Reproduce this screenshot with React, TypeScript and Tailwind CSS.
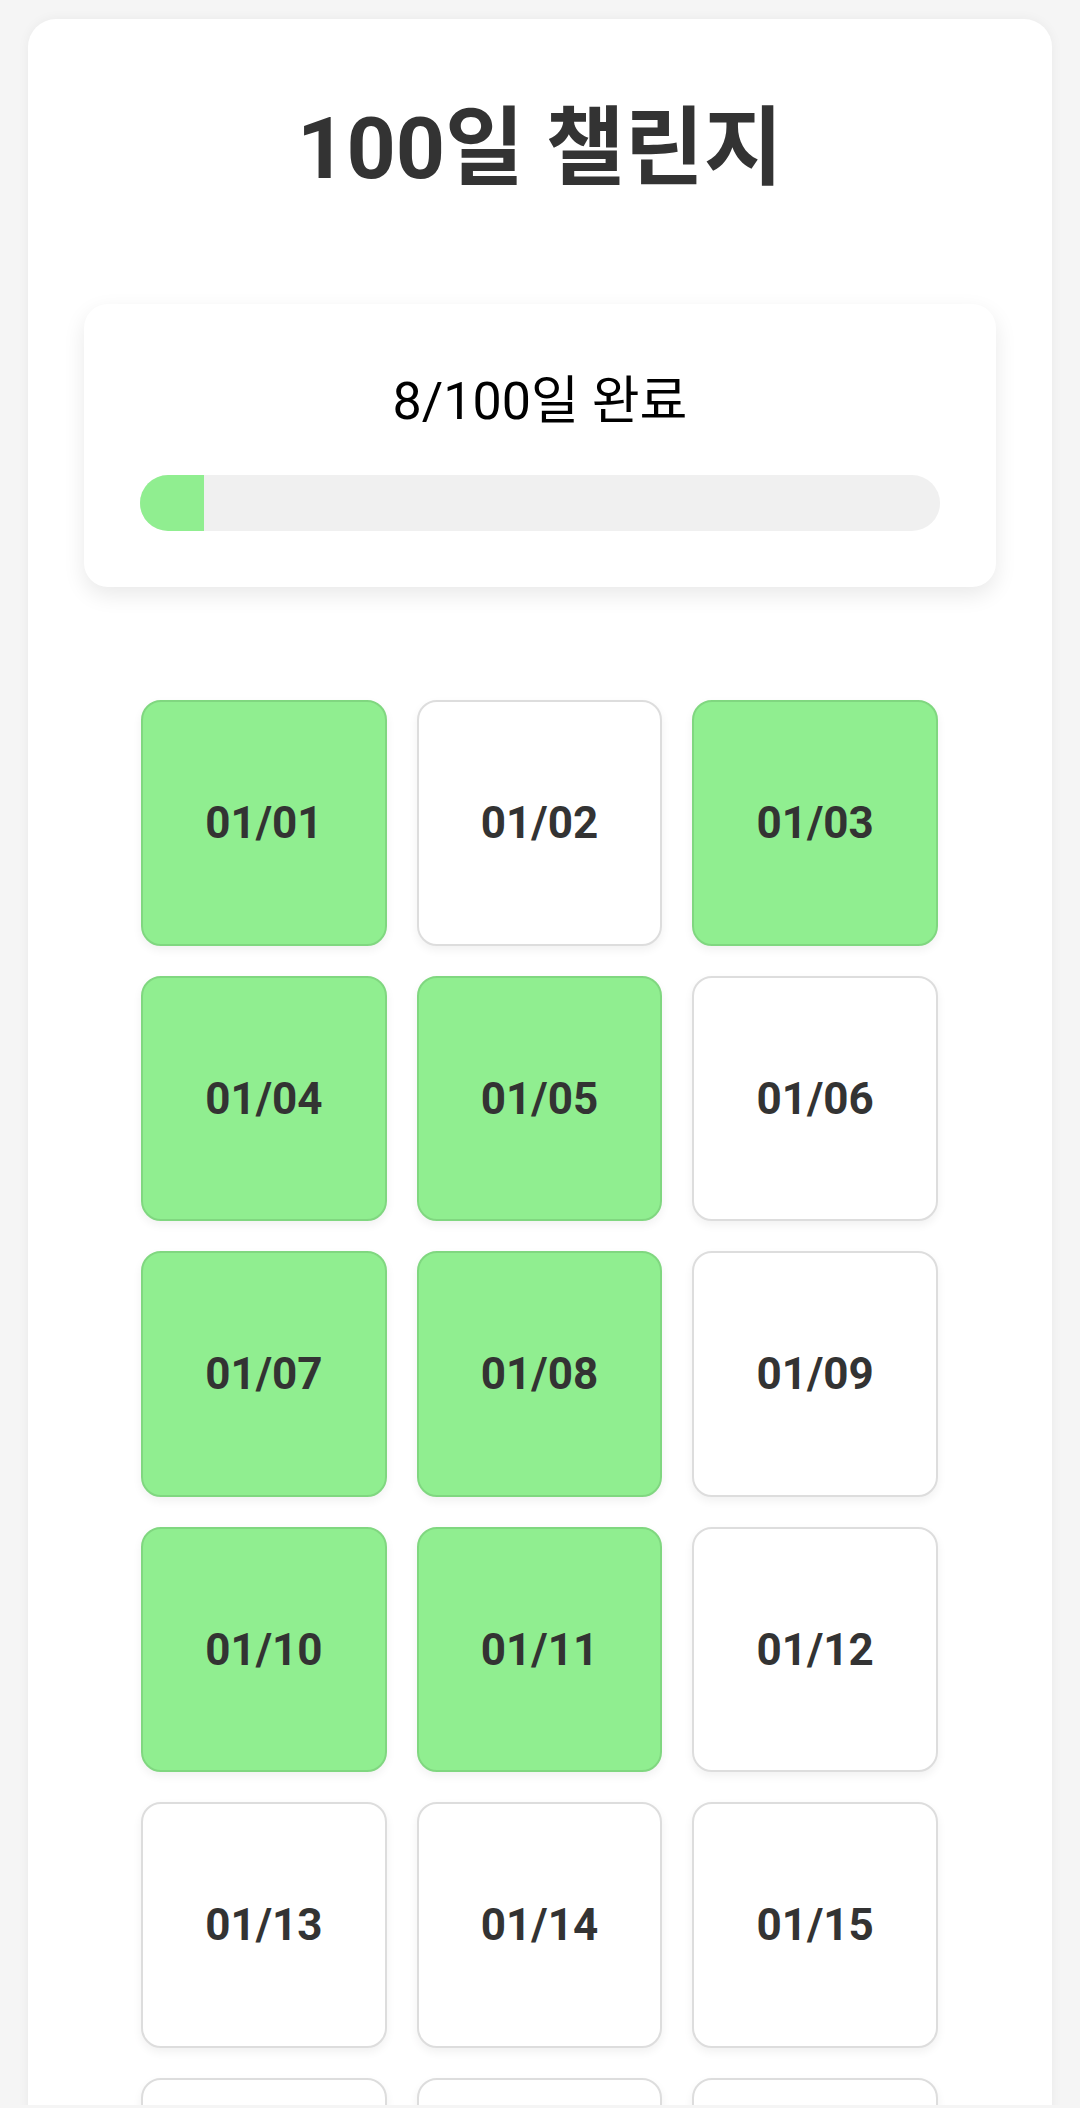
const TOTAL_DAYS = 100;
const DONE = new Set([1, 3, 4, 5, 7, 8, 10, 11]);

const days = Array.from({ length: TOTAL_DAYS }, (_, i) => {
  const d = new Date(2024, 0, 1 + i);
  const mm = String(d.getMonth() + 1).padStart(2, '0');
  const dd = String(d.getDate()).padStart(2, '0');
  return { id: i + 1, label: `${mm}/${dd}`, done: DONE.has(i + 1) };
});

function DayCell({ label, done }: { label: string; done: boolean }) {
  return (
    <div
      className={`flex h-[245.5px] items-center justify-center rounded-[20px] border-2 shadow-[0_4px_10px_rgba(0,0,0,0.06)] ${
        done ? 'border-[#80d780] bg-[#90ee90]' : 'border-[#dddddd] bg-white'
      }`}
    >
      <span className="text-[44px] font-bold text-[#333333]">{label}</span>
    </div>
  );
}

export default function App() {
  const completed = days.filter((d) => d.done).length;
  const percent = (completed / TOTAL_DAYS) * 100;

  return (
    <div className="h-[2108px] overflow-hidden bg-[#f5f5f5] font-['Roboto','Noto_Sans_CJK_KR',sans-serif]">
      <div className="h-[2105px] overflow-hidden px-[28px] pt-[19px]">
        <div className="rounded-[28px] bg-white px-[56px] pb-[56px] pt-[78px] shadow-[0_0_12px_rgba(0,0,0,0.05)]">
          <h1 className="text-center text-[86px] font-bold leading-[1.2] text-[#333333]">100일 챌린지</h1>

          <div className="mt-[104px] rounded-[24px] bg-white p-[56px] shadow-[0_8px_22px_rgba(0,0,0,0.09)]">
            <p className="mb-[32px] text-center text-[52px] leading-[1.6] text-black">
              {completed}/{TOTAL_DAYS}일 완료
            </p>
            <div className="h-[56px] overflow-hidden rounded-full bg-[#f0f0f0]">
              <div className="h-full bg-[#90ee90]" style={{ width: `${percent}%` }} />
            </div>
          </div>

          <div className="grid grid-cols-3 gap-[30px] py-[57px] pl-[57px] pr-[58px] pt-[113px]">
            {days.map((d) => (
              <DayCell key={d.id} label={d.label} done={d.done} />
            ))}
          </div>
        </div>
      </div>
    </div>
  );
}
